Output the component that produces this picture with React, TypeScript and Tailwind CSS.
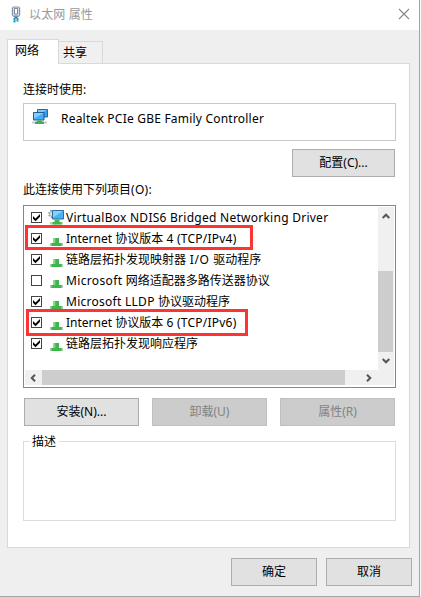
import React from "react";

const FONT = "font-['Noto_Sans','Noto_Sans_CJK_SC',sans-serif]";

function PlugIcon() {
  return (
    <svg width="10" height="17" viewBox="0 0 10 17">
      <path d="M2 .5h6L9.200 2v7L7.500 11h-5L.8 9V2z" fill="#8791a3" />
      <path d="M2 1.500h6v8H2z" fill="#d5dce8" />
      <path d="M3.500 2.500h3v5.500h-3z" fill="#fff" stroke="#66708a" strokeWidth=".8" />
      <path d="M3.500 11h3v1.500h-3z" fill="#4a6d8f" />
      <path d="M2.500 12h2v4.500h-2zM5.500 12h2v3.500h-2z" fill="#1aa0cc" />
    </svg>
  );
}

function AdapterIcon() {
  return (
    <svg width="16" height="16" viewBox="0 0 16 16">
      <path d="M5.500.5h10v7.500h-10z" fill="#3a9eea" stroke="#1b6ca8" />
      <path d="M6 1h9L6 6z" fill="#7cc8fa" />
      <path d="M0 12.500h15v2H0z" fill="#c9cccb" />
      <path d="M1.500 3.500h10.500v7.500h-10.500z" fill="#46acf5" stroke="#1b5f94" />
      <path d="M2 4h9.500L2 9.500z" fill="#85cdfb" />
      <path d="M5 11.500h5v1l2 .5v2H3v-2l2-.5z" fill="#43ae4b" />
    </svg>
  );
}

function ServiceIcon() {
  return (
    <svg width="16" height="16" viewBox="0 0 16 16" className="shrink-0">
      <circle cx="4.500" cy="5" r="3.300" fill="#dce2e8" stroke="#8e989f" strokeWidth="2" strokeDasharray="1.500 1.100" />
      <path d="M4.500 1.500h11v8.500h-11z" fill="#4ab0f3" stroke="#2d6d99" />
      <path d="M5 2h10L5 8.500z" fill="#86d0fb" />
      <path d="M2 13h13v2.500H2z" fill="#b6d8b6" />
      <path d="M6.500 10.500h5V13h2v2.500h-9V13h2z" fill="#44b450" />
    </svg>
  );
}

function ProtocolIcon() {
  return (
    <svg width="13" height="8" viewBox="0 0 13 8" className="shrink-0">
      <path d="M0 5h13v3H0z" fill="#a9cfa9" />
      <path d="M3.500 0h5.500v5h2.500v3h-10V5h2z" fill="#3fb54c" />
      <path d="M3.500 0h1.800v5H3.500z" fill="#86d58b" />
    </svg>
  );
}

function Check({ on }: { on: boolean }) {
  return (
    <span className="flex h-[11px] w-[11px] shrink-0 items-center justify-center border border-[#444] bg-white">
      {on && (
        <svg width="9" height="9" viewBox="0 0 9 9" className="shrink-0">
          <path d="M1 3l2.500 2.500L8 1v2.700L3.500 8.200 1 5.700z" fill="#000" />
        </svg>
      )}
    </span>
  );
}

function Button({ children, className, disabled }: { children: React.ReactNode; className: string; disabled?: boolean }) {
  return (
    <button
      disabled={disabled}
      className={`flex h-[28px] items-center justify-center border leading-none ${
        disabled ? "border-[#bfbfbf] bg-[#ccc] text-[#838383]" : "border-[#adadad] bg-[#e1e1e1] text-black"
      } ${className}`}
    >
      {children}
    </button>
  );
}

type Item = { key: string; on: boolean; service?: boolean; label: React.ReactNode };

const items: Item[] = [
  {
    key: "vbox",
    on: true,
    service: true,
    label: <span className="tracking-[0.26px]">VirtualBox NDIS6 Bridged Networking Driver</span>,
  },
  { key: "ipv4", on: true, label: <>Internet 协议版本<span className="tracking-[0.23px]"> 4 (TCP/IPv4)</span></> },
  { key: "mapper", on: true, label: <>链路层拓扑发现映射器<span className="tracking-[0.6px]"> I/O </span>驱动程序</> },
  { key: "mux", on: false, label: <><span className="tracking-[0.35px]">Microsoft </span>网络适配器多路传送器协议</> },
  { key: "lldp", on: true, label: <><span className="tracking-[0.27px]">Microsoft LLDP </span>协议驱动程序</> },
  { key: "ipv6", on: true, label: <>Internet 协议版本<span className="tracking-[0.23px]"> 6 (TCP/IPv6)</span></> },
  { key: "responder", on: true, label: "链路层拓扑发现响应程序" },
];

function Chevron({ d, w, h }: { d: string; w: number; h: number }) {
  return (
    <svg width={w} height={h} viewBox={`0 0 ${w} ${h}`}>
      <path d={d} fill="none" stroke="#555" strokeWidth="2" />
    </svg>
  );
}

function List() {
  return (
    <div className="relative flex h-[183px] w-[373px] flex-col border border-[#828790] bg-white p-px">
      <div className="flex h-[163px]">
        <div className="flex w-[353px] flex-col">
          {items.map((it) => (
            <div key={it.key} className="flex h-[21px] items-center pl-[6px]">
              <Check on={it.on} />
              <span className={`flex h-[21px] w-[24px] shrink-0 ${it.service ? "items-start pt-[2px] pl-[6px]" : "items-end pb-[3px] pl-[8px]"}`}>
                {it.service ? <ServiceIcon /> : <ProtocolIcon />}
              </span>
              <span className="whitespace-pre">{it.label}</span>
            </div>
          ))}
        </div>
        <div className="flex w-4 flex-col bg-[#f0f0f0]">
          <div className="flex h-[64px] justify-center pt-[6px]">
            <Chevron w={8} h={6} d="M.7 5L4 1.700 7.300 5" />
          </div>
          <div className="h-[81px] w-[15px] bg-[#cdcdcd]" />
          <div className="flex justify-center pt-[6px]">
            <Chevron w={8} h={6} d="M.7 1L4 4.300 7.300 1" />
          </div>
        </div>
      </div>
      <div className="flex h-[15px] bg-[#f0f0f0]">
        <div className="flex w-[17px] items-center pl-[5px]">
          <Chevron w={6} h={8} d="M5 .7L1.700 4 5 7.300" />
        </div>
        <div className="w-[303px] bg-[#cdcdcd]" />
        <div className="flex items-center pl-[21px]">
          <Chevron w={6} h={8} d="M1 .7L4.300 4 1 7.300" />
        </div>
      </div>
      <div className="absolute top-[19px] left-[1px] h-[25px] w-[228px] border-[3px] border-[#fc3434]" />
      <div className="absolute top-[103px] left-[2px] h-[27px] w-[222px] border-[3px] border-[#fc3434]" />
    </div>
  );
}

export default function App() {
  return (
    <div className={`flex h-[597px] w-[421px] bg-[#f8f8f8] text-[12px] leading-[16px] text-black ${FONT}`}>
      <div className="flex w-[420px] flex-col border-r border-b border-[#a5a5a5] bg-[#efefef]">
        <header className="flex h-[30px] items-center bg-white pl-[11px] text-[#999]">
          <div className="-mt-[2px]">
            <PlugIcon />
          </div>
          <span className="ml-[8px] tracking-[0.15px]">以太网 属性</span>
          <svg className="-mt-[2px] mr-[9px] ml-auto" width="12" height="12" viewBox="0 0 12 12">
            <path d="M1 1l10 10M11 1L1 11" stroke="#888" strokeWidth="1.100" />
          </svg>
        </header>

        <nav className="flex h-[34px] items-end pt-[9px] pl-[7px]">
          <div className="z-10 flex h-[25px] w-[52px] border border-b-0 border-[#d9d9d9] bg-white pt-[3px] pl-[7px] whitespace-nowrap">网络</div>
          <div className="flex h-[23px] w-[44px] border border-b-0 border-l-0 border-[#d9d9d9] bg-[#f0f0f0] pt-[3px] pl-[4px]">共享</div>
        </nav>

        <main className="-mt-px ml-[7px] flex h-[485px] w-[403px] flex-col border border-[#d9d9d9] bg-white pl-[15px]">
          <div className="mt-[18px] h-[21px]">连接时使用:</div>
          <div className="flex h-[38px] w-[373px] border border-[#c8c8c8] pt-[5px] pl-[8px]">
            <AdapterIcon />
            <span className="ml-[13px] pt-[2px] tracking-[0.21px] whitespace-pre">Realtek PCIe GBE Family Controller</span>
          </div>
          <Button className="mt-[8px] ml-[269px] w-[103px]">配置(C)...</Button>
          <div className="mt-[5px] h-[23px]">此连接使用下列项目<span className="tracking-[0.3px]">(O):</span></div>
          <List />
          <div className="mt-[10px] ml-px flex gap-[13px]">
            <Button className="w-[115px]">安装(N)...</Button>
            <Button className="w-[115px]" disabled>卸载(U)</Button>
            <Button className="w-[115px]" disabled>属性(R)</Button>
          </div>
          <section className="mt-[15px] h-[80px] w-[373px] border border-[#dcdcdc] pl-[6px]">
            <span className="-mt-[8px] block w-[29px] bg-white pl-[2px]">描述</span>
          </section>
        </main>

        <footer className="mt-[10px] flex gap-[9px] pl-[231px]">
          <Button className="w-[86px]">确定</Button>
          <Button className="w-[86px]">取消</Button>
        </footer>
      </div>
    </div>
  );
}
